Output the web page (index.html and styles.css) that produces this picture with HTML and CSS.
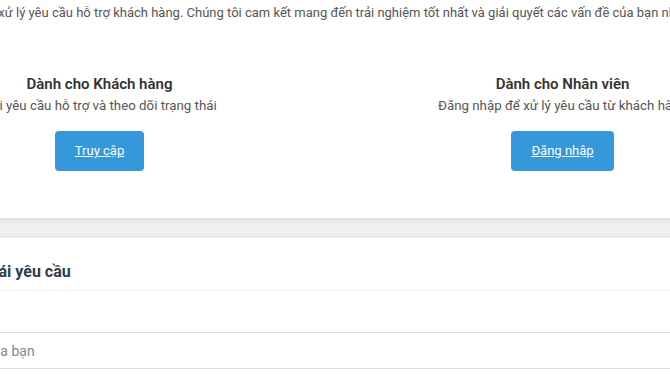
FILE: index.html
```html
<!DOCTYPE html>
<html lang="vi">
<head>
<meta charset="utf-8">
<title>Hỗ trợ khách hàng</title>
<link rel="stylesheet" href="styles.css">
</head>
<body>
<div class="page">
  <div class="card hero">
    <p class="intro">Hệ thống xử lý yêu cầu hỗ trợ khách hàng. Chúng tôi cam kết mang đến trải nghiệm tốt nhất và giải quyết các vấn đề của bạn nhanh nhất.</p>
    <div class="choices">
      <div class="choice">
        <h3>Dành cho Khách hàng</h3>
        <p>Gửi yêu cầu hỗ trợ và theo dõi trạng thái</p>
        <a href="#" class="btn">Truy cập</a>
      </div>
      <div class="choice">
        <h3>Dành cho Nhân viên</h3>
        <p>Đăng nhập để xử lý yêu cầu từ khách hàng</p>
        <a href="#" class="btn">Đăng nhập</a>
      </div>
    </div>
  </div>

  <div class="card lookup">
    <h2>
      <svg class="icon" width="16" height="16" viewBox="0 0 16 16" fill="none" stroke="#2c3e50" stroke-width="2"><circle cx="7" cy="7" r="5"/><path d="M11 11l4 4"/></svg>
      Tra cứu trạng thái yêu cầu
    </h2>
    <div class="form">
      <label for="code">Mã yêu cầu</label>
      <input id="code" type="text" placeholder="Nhập mã yêu cầu của bạn">
    </div>
  </div>
</div>
</body>
</html>
```

FILE: styles.css
```css
html, body {
  margin: 0;
  overflow: hidden;
}
body {
  background: #efefef;
  font-family: Roboto, "Noto Sans", sans-serif;
  color: #333;
}
.page {
  width: 980px;
  margin-left: -159px;
}
.card {
  background: #fff;
  box-shadow: 0 2px 8px rgba(0,0,0,0.08);
}
.hero {
  padding: 5px 42px 47px;
  text-align: center;
}
.intro {
  margin: 0;
  padding-left: 10px;
  font-size: 13px;
  line-height: 16px;
  color: #555;
  white-space: nowrap;
}
.choices {
  display: grid;
  grid-template-columns: 1fr 1fr;
  gap: 30px;
  margin-top: 53px;
}
.choice h3 {
  margin: 0;
  font-size: 15px;
  line-height: 20px;
  font-weight: 600;
  color: #333;
}
.choice p {
  margin: 3px 0 16px;
  font-size: 13.3px;
  line-height: 18px;
  color: #555;
  white-space: nowrap;
}
.btn {
  display: inline-block;
  padding: 0 20px;
  height: 40px;
  line-height: 40px;
  background: #3498db;
  color: #fff;
  font-size: 13px;
  border-radius: 4px;
}
.lookup {
  margin-top: 20px;
  padding: 0 20px 20px;
}
.lookup h2 {
  display: flex;
  align-items: center;
  gap: 7px;
  margin: 0;
  padding: 24px 0 8px;
  font-size: 16px;
  line-height: 20px;
  color: #2c3e50;
  border-bottom: 1px solid #f0f0f0;
}
.form {
  padding-top: 12px;
}
.form label {
  display: block;
  font-size: 13px;
  line-height: 18px;
  color: #555;
  margin-bottom: 11px;
}
.form input {
  display: block;
  box-sizing: border-box;
  width: 100%;
  height: 37px;
  padding: 0 12px;
  border: 1px solid #ddd;
  border-radius: 3px;
  font-family: inherit;
  font-size: 14px;
}
.form input::placeholder {
  color: #888;
}
```
